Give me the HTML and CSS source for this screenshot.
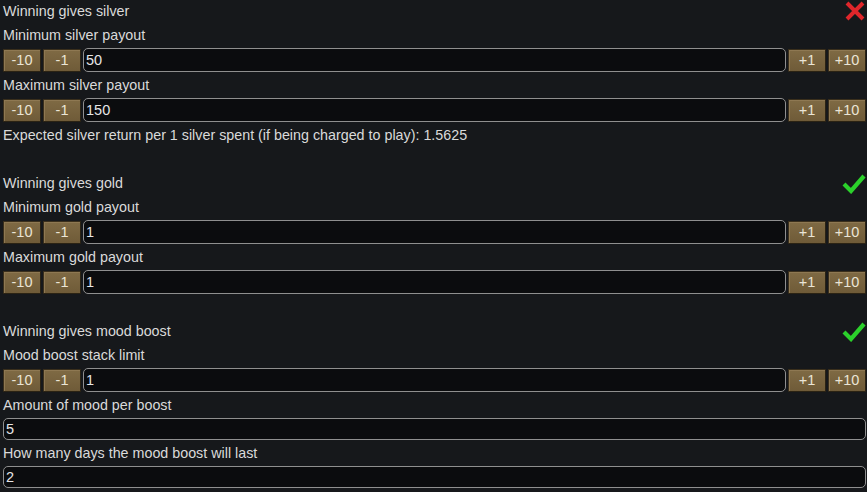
FILE: index.html
```html
<!DOCTYPE html>
<html>
<head>
<meta charset="utf-8">
<link rel="stylesheet" href="styles.css">
</head>
<body>
<div class="panel">
  <div class="row label toggle"><span>Winning gives silver</span>
    <svg class="icon" width="22" height="20" viewBox="0 0 22 20"><path d="M3 2 L19 18 M19 2 L3 18" stroke="#e0262b" stroke-width="4" stroke-linecap="butt"/></svg>
  </div>
  <div class="row label">Minimum silver payout</div>
  <div class="ctrl">
    <button class="btn">-10</button><button class="btn">-1</button>
    <div class="field">50</div>
    <button class="btn">+1</button><button class="btn">+10</button>
  </div>
  <div class="row label">Maximum silver payout</div>
  <div class="ctrl">
    <button class="btn">-10</button><button class="btn">-1</button>
    <div class="field">150</div>
    <button class="btn">+1</button><button class="btn">+10</button>
  </div>
  <div class="row label">Expected silver return per 1 silver spent (if being charged to play): 1.5625</div>

  <div class="section">
  <div class="row label toggle"><span>Winning gives gold</span>
    <svg class="icon" width="24" height="22" viewBox="0 0 24 22"><path d="M2 12 L9 19 L22 4" fill="none" stroke="#2bd12b" stroke-width="4.2" stroke-linejoin="miter"/></svg>
  </div>
  <div class="row label">Minimum gold payout</div>
  <div class="ctrl">
    <button class="btn">-10</button><button class="btn">-1</button>
    <div class="field">1</div>
    <button class="btn">+1</button><button class="btn">+10</button>
  </div>
  <div class="row label">Maximum gold payout</div>
  <div class="ctrl">
    <button class="btn">-10</button><button class="btn">-1</button>
    <div class="field">1</div>
    <button class="btn">+1</button><button class="btn">+10</button>
  </div>
  </div>

  <div class="section">
  <div class="row label toggle"><span>Winning gives mood boost</span>
    <svg class="icon" width="24" height="22" viewBox="0 0 24 22"><path d="M2 12 L9 19 L22 4" fill="none" stroke="#2bd12b" stroke-width="4.2" stroke-linejoin="miter"/></svg>
  </div>
  <div class="row label">Mood boost stack limit</div>
  <div class="ctrl">
    <button class="btn">-10</button><button class="btn">-1</button>
    <div class="field">1</div>
    <button class="btn">+1</button><button class="btn">+10</button>
  </div>
  <div class="row label">Amount of mood per boost</div>
  <div class="ctrl plain"><div class="field">5</div></div>
  <div class="row label">How many days the mood boost will last</div>
  <div class="ctrl plain"><div class="field">2</div></div>
  </div>
</div>
</body>
</html>
```
FILE: styles.css
```css
html, body {
  margin: 0;
  padding: 0;
  background: #16181b;
}
body {
  width: 867px;
  height: 492px;
  overflow: hidden;
  font-family: "Liberation Sans", Arial, sans-serif;
  font-size: 14.3px;
  color: #dadada;
}
.panel {
  display: flex;
  flex-direction: column;
  padding: 0 1px 0 2px;
}
.section {
  display: flex;
  flex-direction: column;
  margin-top: 24px;
}
.row {
  height: 22px;
  line-height: 22px;
  margin-bottom: 2px;
  white-space: nowrap;
}
.label {
  padding-left: 1px;
}
.toggle {
  display: flex;
  justify-content: space-between;
  align-items: center;
}
.icon {
  display: block;
  margin-right: 0;
}
.ctrl {
  display: flex;
  align-items: center;
  height: 24px;
  margin-bottom: 2px;
  gap: 2px;
}
.ctrl.plain {
  height: 22px;
  margin-left: 1px;
}
.btn {
  width: 38px;
  height: 23px;
  margin: 0;
  padding: 0;
  font-family: "Liberation Sans", Arial, sans-serif;
  font-size: 14.5px;
  color: #ebe5d6;
  background: linear-gradient(#7f6a44, #6f5b38);
  border: 1px solid #3a2f1c;
  border-right-color: #2b2314;
  border-bottom-color: #2b2314;
  box-shadow: inset 1px 1px 0 #8e7852;
  border-radius: 1px;
  flex: none;
}
.btn:first-child {
  margin-left: 1px;
}
.field {
  flex: 1;
  height: 24px;
  box-sizing: border-box;
  line-height: 22px;
  background: #0b0c0e;
  border: 1px solid #8f8f8f;
  border-radius: 5px;
  padding-left: 2px;
  color: #e6e6e6;
  font-size: 14.5px;
}
.ctrl.plain .field {
  height: 22px;
  line-height: 20px;
}
```
